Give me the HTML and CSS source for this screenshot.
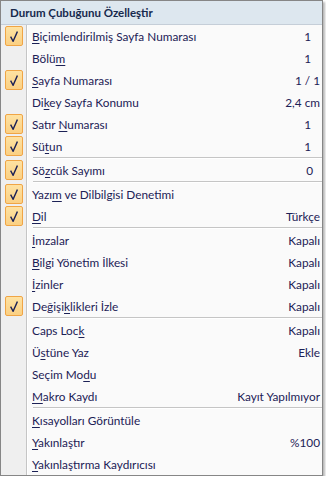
FILE: index.html
```html
<!DOCTYPE html>
<html lang="tr">
<head>
<meta charset="utf-8">
<title>Durum Çubuğunu Özelleştir</title>
<link rel="stylesheet" href="styles.css">
</head>
<body>
<div class="menu">
  <div class="menu-header">Durum Çubuğunu Özelleştir</div>
  <div class="menu-body">
    <div class="item checked"><span class="check"><svg viewBox="0 0 8 11" width="8" height="11"><polyline points="0.6,5.6 3.1,10.3 7.4,0.6"/></svg></span><span class="label"><u>B</u>içimlendirilmiş Sayfa Numarası</span><span class="value pad-digit">1</span></div>
    <div class="item"><span class="check"></span><span class="label">Bölü<u>m</u></span><span class="value pad-digit">1</span></div>
    <div class="item checked"><span class="check"><svg viewBox="0 0 8 11" width="8" height="11"><polyline points="0.6,5.6 3.1,10.3 7.4,0.6"/></svg></span><span class="label"><u>S</u>ayfa Numarası</span><span class="value">1 / 1</span></div>
    <div class="item"><span class="check"></span><span class="label">Di<u>k</u>ey Sayfa Konumu</span><span class="value">2,4 cm</span></div>
    <div class="item checked"><span class="check"><svg viewBox="0 0 8 11" width="8" height="11"><polyline points="0.6,5.6 3.1,10.3 7.4,0.6"/></svg></span><span class="label">Satır <u>N</u>umarası</span><span class="value pad-digit">1</span></div>
    <div class="item checked"><span class="check"><svg viewBox="0 0 8 11" width="8" height="11"><polyline points="0.6,5.6 3.1,10.3 7.4,0.6"/></svg></span><span class="label">Sü<u>t</u>un</span><span class="value pad-digit">1</span></div>
    <div class="sep"></div>
    <div class="item checked"><span class="check"><svg viewBox="0 0 8 11" width="8" height="11"><polyline points="0.6,5.6 3.1,10.3 7.4,0.6"/></svg></span><span class="label">Sö<u>z</u>cük Sayımı</span><span class="value pad-zero">0</span></div>
    <div class="sep"></div>
    <div class="item checked"><span class="check"><svg viewBox="0 0 8 11" width="8" height="11"><polyline points="0.6,5.6 3.1,10.3 7.4,0.6"/></svg></span><span class="label">Yazı<u>m</u> ve Dilbilgisi Denetimi</span><span class="value"></span></div>
    <div class="item checked"><span class="check"><svg viewBox="0 0 8 11" width="8" height="11"><polyline points="0.6,5.6 3.1,10.3 7.4,0.6"/></svg></span><span class="label"><u>D</u>il</span><span class="value">Türkçe</span></div>
    <div class="sep"></div>
    <div class="item"><span class="check"></span><span class="label"><u>İ</u>mzalar</span><span class="value">Kapalı</span></div>
    <div class="item"><span class="check"></span><span class="label"><u>B</u>ilgi Yönetim İlkesi</span><span class="value">Kapalı</span></div>
    <div class="item"><span class="check"></span><span class="label"><u>İ</u>zinler</span><span class="value">Kapalı</span></div>
    <div class="item checked"><span class="check"><svg viewBox="0 0 8 11" width="8" height="11"><polyline points="0.6,5.6 3.1,10.3 7.4,0.6"/></svg></span><span class="label">Değişi<u>k</u>likleri İzle</span><span class="value">Kapalı</span></div>
    <div class="sep"></div>
    <div class="item"><span class="check"></span><span class="label">Caps Loc<u>k</u></span><span class="value">Kapalı</span></div>
    <div class="item"><span class="check"></span><span class="label">Ü<u>s</u>tüne Yaz</span><span class="value">Ekle</span></div>
    <div class="item"><span class="check"></span><span class="label">Seçim Mo<u>d</u>u</span><span class="value"></span></div>
    <div class="item"><span class="check"></span><span class="label"><u>M</u>akro Kaydı</span><span class="value">Kayıt Yapılmıyor</span></div>
    <div class="sep"></div>
    <div class="item"><span class="check"></span><span class="label"><u>K</u>ısayolları Görüntüle</span><span class="value"></span></div>
    <div class="item"><span class="check"></span><span class="label"><u>Y</u>akınlaştır</span><span class="value">%100</span></div>
    <div class="item"><span class="check"></span><span class="label"><u>Y</u>akınlaştırma Kaydırıcısı</span><span class="value"></span></div>
  </div>
</div>
</body>
</html>
```
FILE: styles.css
```css
html, body {
  margin: 0;
  padding: 0;
  background: #ffffff;
}

body {
  font-family: Lato, "Noto Sans", "Liberation Sans", sans-serif;
  font-size: 11.8px;
  color: #1c2156;
}

.menu {
  width: 321px;
  border: 1px solid #868686;
  background: #fafafa;
  box-shadow: 2px 2px 2px rgba(0, 0, 0, 0.28);
}

.menu-header {
  height: 23px;
  line-height: 23px;
  padding-left: 9px;
  background: #dde7ef;
  border-bottom: 1px solid #c5ced8;
  font-weight: bold;
  font-size: 11.5px;
  color: #16294d;
}

.menu-body {
  display: flex;
  flex-direction: column;
  background: linear-gradient(to right, #efefef 0, #efefef 25px, #c5c5c5 25px, #c5c5c5 26px, #ffffff 26px, #ffffff 27px, #fafafa 27px);
}

.item {
  display: flex;
  align-items: center;
  height: 22px;
}

.check {
  flex: none;
  width: 18px;
  height: 20px;
  margin: 0 9px 0 4px;
  box-sizing: border-box;
  display: flex;
  align-items: center;
  justify-content: center;
  border-radius: 2px;
}

.checked .check {
  border: 1px solid #f0a545;
  background: linear-gradient(#fee2a2, #fbd083);
}

.check svg polyline {
  fill: none;
  stroke: #1c2156;
  stroke-width: 1.4;
}

.label {
  flex: 1;
  white-space: nowrap;
}

.label u {
  text-underline-offset: 2px;
}

.value {
  padding-right: 2px;
  white-space: nowrap;
}

.value.pad-digit {
  padding-right: 11px;
}

.value.pad-zero {
  padding-right: 9px;
}

.sep {
  height: 0;
  margin-left: 32px;
  border-top: 1px solid #c5c5c5;
  border-bottom: 1px solid #ffffff;
}
```
